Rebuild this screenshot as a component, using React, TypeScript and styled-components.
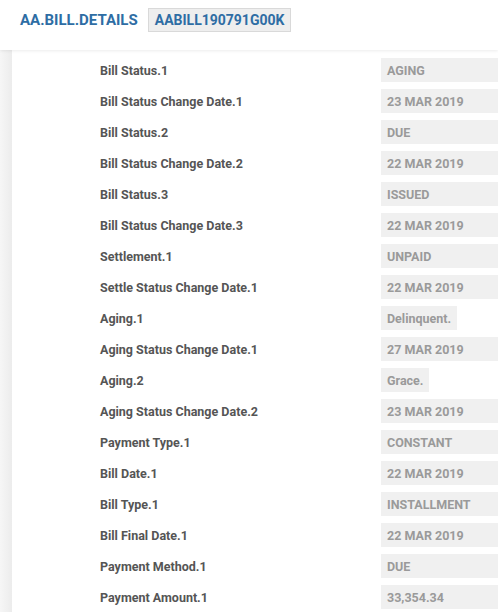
import React from "react";
import styled, { createGlobalStyle } from "styled-components";

const Global = createGlobalStyle`
  html, body { margin: 0; padding: 0; background: #fff; }
  body { font-family: Roboto, "Liberation Sans", Arial, sans-serif; }
`;

const Page = styled.div`
  width: 498px;
  height: 612px;
  overflow: hidden;
  display: flex;
  flex-direction: column;
  background: #fff;
`;

const Header = styled.header`
  height: 50px;
  box-sizing: border-box;
  flex: none;
  display: flex;
  align-items: flex-start;
  gap: 10px;
  padding: 8px 0 0 20px;
  box-shadow: 0 1px 3px rgba(0, 0, 0, 0.08);
  position: relative;
  z-index: 1;
`;

const Title = styled.h1`
  margin: 0;
  height: 24px;
  display: flex;
  align-items: center;
  font-size: 15px;
  font-weight: 700;
  color: #2e6da4;
`;

const Badge = styled.span`
  display: inline-flex;
  align-items: center;
  box-sizing: border-box;
  height: 24px;
  padding: 0 6px;
  background: #eeeeee;
  border: 1px solid #d9d9d9;
  font-size: 14px;
  font-weight: 700;
  color: #2e6da4;
`;

const Body = styled.div`
  flex: 1;
  display: flex;
`;

const Gutter = styled.div`
  width: 12px;
  flex: none;
  background: linear-gradient(to right, #f6f6f6, #ececec);
`;

const Panel = styled.div`
  flex: 1;
  padding: 8px 0 0 88px;
  display: grid;
  grid-template-columns: 281px 1fr;
  grid-auto-rows: 31px;
  align-content: start;
`;

const Label = styled.div`
  font-size: 12.5px;
  font-weight: 700;
  color: #555;
  height: 24px;
  display: flex;
  align-items: center;
`;

const Value = styled.div<{ $fit?: boolean }>`
  height: 24px;
  display: flex;
  align-items: center;
  justify-self: ${(p) => (p.$fit ? "start" : "stretch")};
  padding: 0 6px;
  background: #f0f0f0;
  font-size: 12.5px;
  font-weight: 700;
  color: #9a9a9a;
`;

const rows: [string, string, boolean?][] = [
  ["Bill Status.1", "AGING"],
  ["Bill Status Change Date.1", "23 MAR 2019"],
  ["Bill Status.2", "DUE"],
  ["Bill Status Change Date.2", "22 MAR 2019"],
  ["Bill Status.3", "ISSUED"],
  ["Bill Status Change Date.3", "22 MAR 2019"],
  ["Settlement.1", "UNPAID"],
  ["Settle Status Change Date.1", "22 MAR 2019"],
  ["Aging.1", "Delinquent.", true],
  ["Aging Status Change Date.1", "27 MAR 2019"],
  ["Aging.2", "Grace.", true],
  ["Aging Status Change Date.2", "23 MAR 2019"],
  ["Payment Type.1", "CONSTANT"],
  ["Bill Date.1", "22 MAR 2019"],
  ["Bill Type.1", "INSTALLMENT"],
  ["Bill Final Date.1", "22 MAR 2019"],
  ["Payment Method.1", "DUE"],
  ["Payment Amount.1", "33,354.34"],
];

export default function App() {
  return (
    <Page>
      <Global />
      <Header>
        <Title>AA.BILL.DETAILS</Title>
        <Badge>AABILL190791G00K</Badge>
      </Header>
      <Body>
        <Gutter />
        <Panel>
          {rows.map(([l, v, fit]) => (
            <React.Fragment key={l}>
              <Label>{l}</Label>
              <Value $fit={fit}>{v}</Value>
            </React.Fragment>
          ))}
        </Panel>
      </Body>
    </Page>
  );
}
